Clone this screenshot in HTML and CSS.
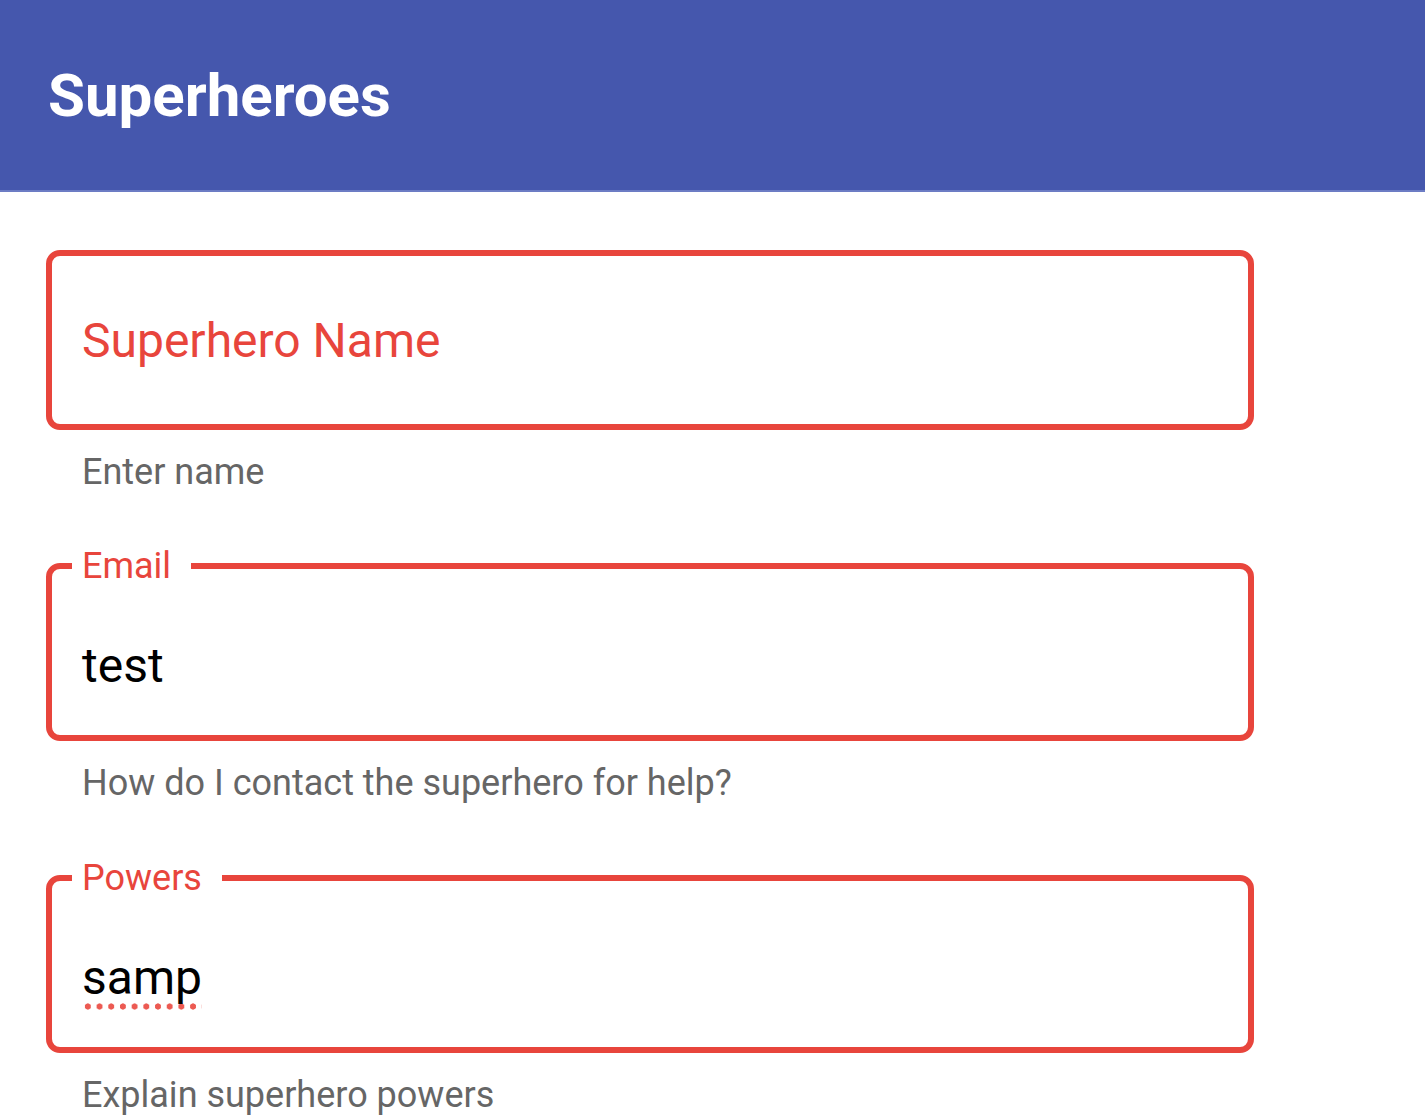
FILE: index.html
```html
<!DOCTYPE html>
<html>
<head>
    <title>Superheroes</title>
    <link rel="stylesheet" href="styles.css">
</head>
<body>
    <header class="app-bar">
        <h1>Superheroes</h1>
    </header>

    <main class="hero-form">
        <div class="field">
            <div class="field-box">
                <span class="field-placeholder">Superhero Name</span>
            </div>
            <p class="helper">Enter name</p>
        </div>

        <div class="field">
            <div class="field-box">
                <span class="field-label">Email</span>
                <span class="field-value">test</span>
            </div>
            <p class="helper">How do I contact the superhero for help?</p>
        </div>

        <div class="field">
            <div class="field-box">
                <span class="field-label">Powers</span>
                <span class="field-value"><span class="misspelled">samp</span></span>
            </div>
            <p class="helper">Explain superhero powers</p>
        </div>
    </main>
</body>
</html>
```

FILE: styles.css
```css
body {
    margin: 0;
    font-family: Roboto, "Liberation Sans", Arial, sans-serif;
    background: #fff;
}
.app-bar {
    height: 192px;
    background-color: #4557ad;
    border-bottom: 2px solid #6c7cc4;
    box-sizing: border-box;
    display: flex;
    align-items: center;
    padding-left: 48px;
}
.app-bar h1 {
    margin: 0;
    color: #fff;
    font-size: 60px;
    font-weight: 700;
}
.hero-form {
    padding: 58px 0 0 46px;
    width: 1208px;
}
.field {
    margin-bottom: 72px;
}
.field-box {
    position: relative;
    height: 178px;
    border: 6px solid #e8453c;
    border-radius: 14px;
    box-sizing: border-box;
    padding: 68px 30px 0;
}
.field:first-child .field-box {
    height: 180px;
    padding-top: 0;
    display: flex;
    align-items: center;
}
.field:first-child {
    margin-bottom: 71px;
}
.field-placeholder {
    color: #e8453c;
    font-size: 48px;
}
.field-label {
    position: absolute;
    top: -23px;
    left: 20px;
    padding: 0 20px 0 10px;
    background: #fff;
    color: #e8453c;
    font-size: 36px;
    line-height: 40px;
}
.field-value {
    display: block;
    color: #000;
    font-size: 48px;
    line-height: 58px;
}
.misspelled {
    padding-bottom: 4px;
    background-image: radial-gradient(circle, #ec5a52 2.8px, transparent 3.4px);
    background-size: 11.7px 7px;
    background-repeat: repeat-x;
    background-position: 0 100%;
}
.helper {
    margin: 22px 0 0 36px;
    color: #666;
    font-size: 36px;
    line-height: 40px;
}
```
